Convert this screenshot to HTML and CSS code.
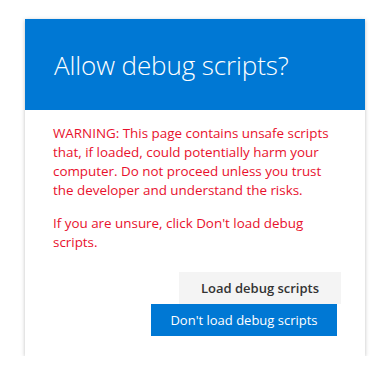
FILE: index.html
```html
<!DOCTYPE html>
<html>
<head>
<meta charset="utf-8">
<link rel="stylesheet" href="styles.css">
</head>
<body>
<div class="dialog">
  <div class="header">
    <h1 class="title">Allow debug scripts?</h1>
  </div>
  <div class="content">
    <p class="warn">WARNING: This page contains unsafe scripts that, if loaded, could potentially harm your computer. Do not proceed unless you trust the developer and understand the risks.</p>
    <p class="warn">If you are unsure, click Don't load debug scripts.</p>
    <div class="actions">
      <button class="btn btn-load">Load debug scripts</button>
      <button class="btn btn-primary">Don't load debug scripts</button>
    </div>
  </div>
</div>
</body>
</html>
```
FILE: styles.css
```css
html, body {
  margin: 0;
  padding: 0;
  background: #fff;
}
body {
  font-family: "Open Sans", "Noto Sans", sans-serif;
}
.dialog {
  margin: 19px 0 0 25px;
  width: 340px;
  background: #fff;
  box-shadow: 0 1px 4px rgba(0,0,0,0.25);
}
.header {
  background: #0078d4;
  height: 91px;
  display: flex;
  align-items: center;
  padding-left: 29px;
}
.title {
  margin: 0;
  color: #fff;
  font-weight: 300;
  font-size: 26px;
  letter-spacing: -0.1px;
}
.content {
  padding: 14px 0 20px 28px;
}
.warn {
  margin: 0 0 14px 0;
  color: #e8112d;
  font-size: 13.4px;
  line-height: 19px;
  width: 282px;
}
.actions {
  display: flex;
  flex-direction: column;
  align-items: flex-end;
  margin-top: 20px;
}
.btn {
  font-family: inherit;
  border: none;
  height: 32px;
  font-size: 13px;
  font-weight: 600;
  padding: 0;
  cursor: pointer;
}
.btn-load {
  width: 162px;
  margin-right: 24px;
  background: #f4f4f4;
  color: #333;
}
.btn-primary {
  width: 186px;
  margin-right: 28px;
  background: #0078d4;
  color: #fff;
  font-weight: 400;
}
```
